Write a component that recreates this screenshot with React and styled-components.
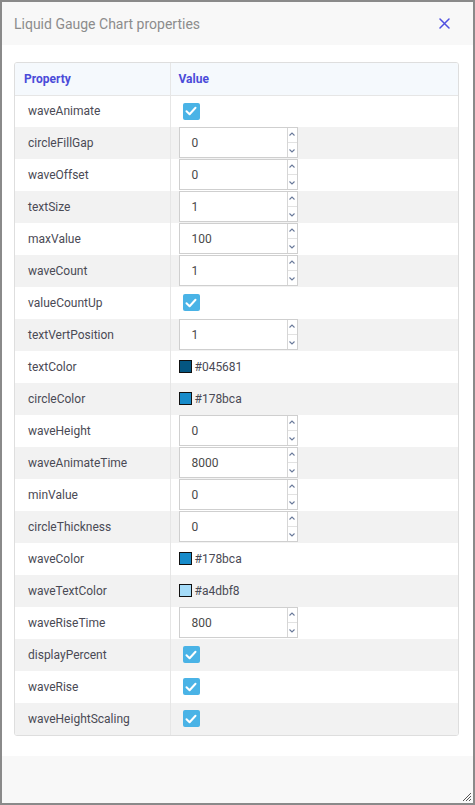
import React from "react";
import styled, { createGlobalStyle } from "styled-components";

const GlobalStyle = createGlobalStyle`
  html, body { margin: 0; padding: 0; }
  body { font-family: Roboto, "Noto Sans", "Liberation Sans", sans-serif; background: #fff; }
  * { box-sizing: border-box; }
`;

const Dialog = styled.div`
  width: 475px;
  height: 805px;
  border: 2px solid #8a8a8a;
  display: flex;
  flex-direction: column;
  background: #fff;
  position: relative;
`;

const Header = styled.div`
  height: 43px;
  flex: none;
  background: #f8f8f8;
  display: flex;
  align-items: center;
  justify-content: space-between;
  padding: 0 22px 0 12px;
`;

const Title = styled.div`
  font-size: 14px;
  color: #8c8c8c;
`;

const Close = styled.button`
  border: 0;
  background: none;
  padding: 0;
  width: 14px;
  height: 14px;
  display: flex;
  align-items: center;
  justify-content: center;
  cursor: pointer;
`;

const Body = styled.div`
  flex: 1;
  padding: 17px 14px 0 12px;
`;

const TableFrame = styled.div`
  border: 1px solid #dedede;
  border-radius: 3px;
  overflow: hidden;
  position: relative;
`;

const Table = styled.table`
  width: 100%;
  border-collapse: collapse;
  table-layout: fixed;
  font-size: 12px;
`;

const HeadCell = styled.th`
  height: 32px;
  text-align: left;
  font-weight: 700;
  color: #4b4bd9;
  background: #f5f9fd;
  padding: 0 0 0 ${(p) => p.$pad}px;
  border-bottom: 1px solid #e6e6e6;
  border-right: ${(p) => (p.$divider ? "1px solid #e6e6e6" : "0")};
  width: ${(p) => p.$w || "auto"};
`;

const Row = styled.tr`
  background: ${(p) => (p.$alt ? "#f2f2f2" : "#fff")};
  & + & td { border-top: 1px solid #e8e8e8; }
`;

const LabelCell = styled.td`
  height: 32px;
  padding: 0 0 0 13px;
  color: #4a4a55;
  border-right: 1px solid #e6e6e6;
  vertical-align: middle;
`;

const ValueCell = styled.td`
  height: 32px;
  padding: 0 0 0 8px;
  vertical-align: top;
`;

const CenterBox = styled.div`
  height: 31px;
  display: flex;
  align-items: center;
  padding-left: ${(p) => p.$indent || 0}px;
`;

const CheckBox = styled.span`
  width: 17px;
  height: 17px;
  border-radius: 2px;
  background: #4ab3e6;
  display: inline-flex;
  align-items: center;
  justify-content: center;
`;

const NumberBox = styled.div`
  width: 119px;
  height: 31px;
  border: 1px solid #cfcfcf;
  background: #fff;
  display: flex;
`;

const NumberValue = styled.div`
  flex: 1;
  padding-left: 12px;
  display: flex;
  align-items: center;
  color: #4a4a4a;
  font-size: 12px;
`;

const Spinner = styled.div`
  width: 10px;
  border-left: 1px solid #d6d6d6;
  display: flex;
  flex-direction: column;
`;

const SpinHalf = styled.div`
  flex: 1;
  display: flex;
  align-items: ${(p) => (p.$up ? "flex-start" : "flex-end")};
  justify-content: center;
  padding: ${(p) => (p.$up ? "4px 0 0" : "0 0 4px")};
  & + & { border-top: 1px solid #e2e2e2; }
`;

const Swatch = styled.span`
  width: 13px;
  height: 13px;
  border: 1px solid #111;
  background: ${(p) => p.$color};
  margin-right: 3px;
`;

const ColorText = styled.span`
  color: #4a4a55;
  font-size: 12px;
`;

const Footer = styled.div`
  height: 47px;
  flex: none;
  background: #f8f8f8;
`;

const Grip = styled.svg`
  position: absolute;
  right: 1px;
  bottom: 1px;
`;

const Arrow = ({ up }) => (
  <svg width="6" height="4" viewBox="0 0 6 4">
    <path
      d={up ? "M0.5 3.5 L3 1 L5.5 3.5" : "M0.5 0.5 L3 3 L5.5 0.5"}
      fill="none"
      stroke="#6a7a9a"
      strokeWidth="1.1"
    />
  </svg>
);

const Check = () => (
  <CheckBox>
    <svg width="12" height="10" viewBox="0 0 12 10">
      <path d="M1.5 5.2 L4.6 8.2 L10.5 1.8" fill="none" stroke="#fff" strokeWidth="2" strokeLinecap="round" strokeLinejoin="round" />
    </svg>
  </CheckBox>
);

const NumberField = ({ value }) => (
  <NumberBox>
    <NumberValue>{value}</NumberValue>
    <Spinner>
      <SpinHalf $up><Arrow up /></SpinHalf>
      <SpinHalf><Arrow /></SpinHalf>
    </Spinner>
  </NumberBox>
);

const props = [
  ["waveAnimate", "bool"],
  ["circleFillGap", "num", "0"],
  ["waveOffset", "num", "0"],
  ["textSize", "num", "1"],
  ["maxValue", "num", "100"],
  ["waveCount", "num", "1"],
  ["valueCountUp", "bool"],
  ["textVertPosition", "num", "1"],
  ["textColor", "color", "#045681"],
  ["circleColor", "color", "#178bca"],
  ["waveHeight", "num", "0"],
  ["waveAnimateTime", "num", "8000"],
  ["minValue", "num", "0"],
  ["circleThickness", "num", "0"],
  ["waveColor", "color", "#178bca"],
  ["waveTextColor", "color", "#a4dbf8"],
  ["waveRiseTime", "num", "800"],
  ["displayPercent", "bool"],
  ["waveRise", "bool"],
  ["waveHeightScaling", "bool"],
];

const renderValue = (type, value) => {
  if (type === "bool") return <CenterBox $indent={4}><Check /></CenterBox>;
  if (type === "num") return <NumberField value={value} />;
  return (
    <CenterBox>
      <Swatch $color={value} />
      <ColorText>{value}</ColorText>
    </CenterBox>
  );
};

export default function App() {
  return (
    <>
      <GlobalStyle />
      <Dialog>
        <Header>
          <Title>Liquid Gauge Chart properties</Title>
          <Close aria-label="close">
            <svg width="11" height="11" viewBox="0 0 11 11">
              <path d="M1 1 L10 10 M10 1 L1 10" stroke="#5050e0" strokeWidth="1.5" strokeLinecap="round" />
            </svg>
          </Close>
        </Header>
        <Body>
          <TableFrame>
            <Table>
              <thead>
                <tr>
                  <HeadCell $pad={9} $w="155px" $divider>Property</HeadCell>
                  <HeadCell $pad={8}>Value</HeadCell>
                </tr>
              </thead>
              <tbody>
                {props.map(([name, type, value], i) => (
                  <Row key={name} $alt={i % 2 === 1}>
                    <LabelCell>{name}</LabelCell>
                    <ValueCell>{renderValue(type, value)}</ValueCell>
                  </Row>
                ))}
              </tbody>
            </Table>
          </TableFrame>
        </Body>
        <Footer />
        <Grip width="10" height="10" viewBox="0 0 10 10">
          <path d="M9 1 L1 9 M9 4 L4 9 M9 7 L7 9" stroke="#555" strokeWidth="1" />
        </Grip>
      </Dialog>
    </>
  );
}
